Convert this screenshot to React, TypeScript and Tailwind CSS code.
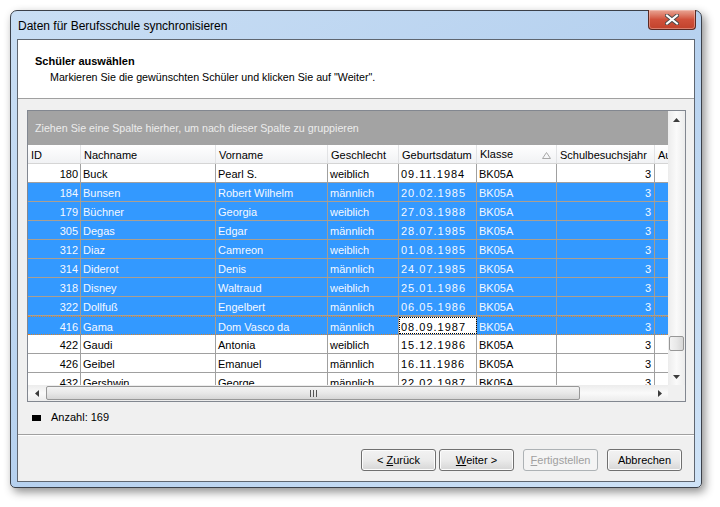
import React from "react"

type Row = { id: number; nach: string; vor: string; ges: string; geb: string; kl: string; jahr: number; sel: boolean; focus?: boolean }

const rows: Row[] = [
    { id: 180, nach: "Buck", vor: "Pearl S.", ges: "weiblich", geb: "09.11.1984", kl: "BK05A", jahr: 3, sel: false },
    { id: 184, nach: "Bunsen", vor: "Robert Wilhelm", ges: "männlich", geb: "20.02.1985", kl: "BK05A", jahr: 3, sel: true },
    { id: 179, nach: "Büchner", vor: "Georgia", ges: "weiblich", geb: "27.03.1988", kl: "BK05A", jahr: 3, sel: true },
    { id: 305, nach: "Degas", vor: "Edgar", ges: "männlich", geb: "28.07.1985", kl: "BK05A", jahr: 3, sel: true },
    { id: 312, nach: "Diaz", vor: "Camreon", ges: "weiblich", geb: "01.08.1985", kl: "BK05A", jahr: 3, sel: true },
    { id: 314, nach: "Diderot", vor: "Denis", ges: "männlich", geb: "24.07.1985", kl: "BK05A", jahr: 3, sel: true },
    { id: 318, nach: "Disney", vor: "Waltraud", ges: "weiblich", geb: "25.01.1986", kl: "BK05A", jahr: 3, sel: true },
    { id: 322, nach: "Dollfuß", vor: "Engelbert", ges: "männlich", geb: "06.05.1986", kl: "BK05A", jahr: 3, sel: true },
    { id: 416, nach: "Gama", vor: "Dom Vasco da", ges: "männlich", geb: "08.09.1987", kl: "BK05A", jahr: 3, sel: true, focus: true },
    { id: 422, nach: "Gaudi", vor: "Antonia", ges: "weiblich", geb: "15.12.1986", kl: "BK05A", jahr: 3, sel: false },
    { id: 426, nach: "Geibel", vor: "Emanuel", ges: "männlich", geb: "16.11.1986", kl: "BK05A", jahr: 3, sel: false },
    { id: 432, nach: "Gershwin", vor: "George", ges: "männlich", geb: "22.02.1987", kl: "BK05A", jahr: 3, sel: false },
]

const tahoma = { fontFamily: '"Liberation Sans", Arial, sans-serif' }

const Arrow = ({ dir }: { dir: "up" | "down" | "left" | "right" }) => {
    const pts = {
        up: "0,4 7,4 3.5,0",
        down: "0,0 7,0 3.5,4",
        left: "4,0 4,7 0,3.5",
        right: "0,0 0,7 4,3.5",
    }[dir]
    const vertical = dir === "up" || dir === "down"
    return <svg width={vertical ? 7 : 4} height={vertical ? 4 : 7} viewBox={vertical ? "0 0 7 4" : "0 0 4 7"}>
        <polygon points={pts} fill="#3c3c3c" />
    </svg>
}

const Btn = ({ children, disabled }: { children: React.ReactNode; disabled?: boolean }) => (
    <div
        className={disabled
            ? "w-[75px] h-[22px] rounded-[3px] border border-[#adb2b5] bg-[#f4f4f4] text-[#a0a0a0] flex items-center justify-center text-[11px]"
            : "w-[75px] h-[22px] rounded-[3px] border border-[#707070] bg-gradient-to-b from-[#f2f2f2] via-[#ebebeb] to-[#d6d6d6] text-black flex items-center justify-center text-[11px] shadow-[inset_0_0_0_1px_#fcfcfc]"}
        style={tahoma}
    >
        {children}
    </div>
)

export default function App() {
    return <div className="w-[720px] h-[507px] bg-white pl-[10px] pt-[10px] overflow-hidden" style={tahoma}>
        <div className="w-[692px] h-[478px] rounded-t-[7px] rounded-b-[5px] border border-[#3b4049] bg-gradient-to-br from-[#c9def4] via-[#b6d1ef] to-[#cfe3f7] shadow-[3px_4px_10px_rgba(0,0,0,0.45)] flex flex-col px-[6px] pb-[5px]">
            {/* title bar */}
            <div className="h-[28px] flex items-start justify-between shrink-0">
                <span className="text-[12px] text-black pl-px mt-[6px]">Daten für Berufsschule synchronisieren</span>
                <div className="w-[48px] h-[20px] -mt-px mr-[-1px] rounded-b-[4px] border border-[#5a2a24] border-t-0 bg-gradient-to-b from-[#e8a595] via-[#d0513b] to-[#c1422c] flex items-center justify-center shadow-[inset_0_0_0_1px_rgba(255,220,210,0.4)]">
                    <svg width="14" height="11" viewBox="0 0 14 11">
                        <path d="M2 1.5 L12 9.5 M12 1.5 L2 9.5" stroke="#4b4b4b" strokeWidth="4" strokeLinecap="square" />
                        <path d="M2 1.5 L12 9.5 M12 1.5 L2 9.5" stroke="#ffffff" strokeWidth="2" strokeLinecap="square" />
                    </svg>
                </div>
            </div>

            {/* client */}
            <div className="flex-1 border border-[#5f6670] bg-[#f0f0f0] flex flex-col">
                <div className="h-[59px] bg-white border-b border-[#a0a0a0] pl-[17px] pt-[13px] shrink-0">
                    <div className="text-[11px] font-bold leading-[16px] text-black">Schüler auswählen</div>
                    <div className="text-[10.7px] leading-[16px] text-black pl-[15px]">Markieren Sie die gewünschten Schüler und klicken Sie auf "Weiter".</div>
                </div>

                <div className="flex-1 flex flex-col pl-[9px] pr-[8px] pt-[11px]">
                    {/* grid */}
                    <div className="w-[659px] h-[292px] border border-[#828790] bg-white flex flex-col text-[11px]">
                        <div className="flex h-[274px]">
                            <div className="w-[640px] flex flex-col overflow-hidden">
                                <div className="h-[34px] bg-[#a3a3a3] text-[#ececec] flex items-center pl-[7px] shrink-0 text-[10.7px]">Ziehen Sie eine Spalte hierher, um nach dieser Spalte zu gruppieren</div>
                                <div className="h-[19px] flex shrink-0 bg-gradient-to-b from-white to-[#f1f2f4] border-b border-[#d5d5d5] text-black leading-[21px]">
                                    <div className="w-[53px] shrink-0 border-r border-[#e2e3e5] pl-[3px]">ID</div>
                                    <div className="w-[135px] shrink-0 border-r border-[#e2e3e5] pl-[3px]">Nachname</div>
                                    <div className="w-[112px] shrink-0 border-r border-[#e2e3e5] pl-[3px]">Vorname</div>
                                    <div className="w-[71px] shrink-0 border-r border-[#e2e3e5] pl-[3px]">Geschlecht</div>
                                    <div className="w-[78px] shrink-0 border-r border-[#e2e3e5] pl-[3px]">Geburtsdatum</div>
                                    <div className="w-[80px] shrink-0 border-r border-[#e2e3e5] pl-[3px] pr-[5px] flex items-center justify-between">
                                        <span className="leading-[21px]">Klasse</span>
                                        <svg width="9" height="7" viewBox="0 0 9 7" className="mt-[3px]"><polygon points="4.5,0.5 8.5,6.5 0.5,6.5" fill="none" stroke="#a8a8a8" /></svg>
                                    </div>
                                    <div className="w-[98px] shrink-0 border-r border-[#e2e3e5] pl-[3px] whitespace-nowrap">Schulbesuchsjahr</div>
                                    <div className="w-[60px] shrink-0 pl-[3px]">Au</div>
                                </div>
                                <div className="flex-1 overflow-hidden">
                                    {rows.map(r => (
                                        <div
                                            key={r.id}
                                            className={r.sel
                                                ? `h-[19px] flex leading-[20px] bg-[#3399ff] text-[#f4f8ff] ${r.focus ? "border-y border-dotted border-[#d9822b]" : "border-b border-[#ab9f90]"}`
                                                : "h-[19px] flex leading-[20px] bg-white text-black border-b border-[#a0a0a0]"}
                                        >
                                            <div className={`w-[53px] shrink-0 border-r pr-[2px] text-right ${r.sel ? "border-[#a59c92]" : "border-[#a0a0a0]"}`}>{r.id}</div>
                                            <div className={`w-[135px] shrink-0 border-r pl-[2px] ${r.sel ? "border-[#a59c92]" : "border-[#a0a0a0]"}`}>{r.nach}</div>
                                            <div className={`w-[112px] shrink-0 border-r pl-[2px] ${r.sel ? "border-[#a59c92]" : "border-[#a0a0a0]"}`}>{r.vor}</div>
                                            <div className={`w-[71px] shrink-0 border-r pl-[2px] ${r.sel ? "border-[#a59c92]" : "border-[#a0a0a0]"}`}>{r.ges}</div>
                                            <div className={`w-[78px] shrink-0 border-r pl-[2px] tracking-[1px] ${r.sel ? "border-[#a59c92]" : "border-[#a0a0a0]"} ${r.focus ? "bg-white text-black outline outline-1 outline-dotted outline-black -outline-offset-1" : ""}`}>{r.geb}</div>
                                            <div className={`w-[80px] shrink-0 border-r pl-[2px] ${r.sel ? "border-[#a59c92]" : "border-[#a0a0a0]"}`}>{r.kl}</div>
                                            <div className={`w-[98px] shrink-0 border-r pr-[3px] text-right ${r.sel ? "border-[#a59c92]" : "border-[#a0a0a0]"}`}>{r.jahr}</div>
                                            <div className="w-[60px] shrink-0" />
                                        </div>
                                    ))}
                                </div>
                            </div>
                            {/* vertical scrollbar */}
                            <div className="w-[17px] flex flex-col bg-gradient-to-r from-[#ececec] via-[#fafafa] to-[#ececec]">
                                <div className="h-[17px] flex items-center justify-center"><Arrow dir="up" /></div>
                                <div className="flex-1 flex flex-col">
                                    <div className="h-[208px]" />
                                    <div className="h-[15px] mx-px rounded-[2px] border border-[#979797] bg-gradient-to-r from-[#f3f3f3] via-[#e8e8e8] to-[#d6d6d6]" />
                                </div>
                                <div className="h-[17px] flex items-center justify-center"><Arrow dir="down" /></div>
                            </div>
                        </div>
                        {/* horizontal scrollbar */}
                        <div className="flex h-[16px]">
                            <div className="w-[640px] flex bg-gradient-to-b from-[#ececec] via-[#fafafa] to-[#ececec]">
                                <div className="w-[17px] flex items-center justify-center"><Arrow dir="left" /></div>
                                <div className="flex-1 flex py-px">
                                    <div className="w-[534px] ml-px rounded-[2px] border border-[#979797] bg-gradient-to-b from-[#f3f3f3] via-[#e8e8e8] to-[#d6d6d6] flex items-center justify-center">
                                        <svg width="7" height="7" viewBox="0 0 7 7">
                                            <path d="M0.5 0 V7 M3.5 0 V7 M6.5 0 V7" stroke="#555" strokeWidth="1" />
                                        </svg>
                                    </div>
                                </div>
                                <div className="w-[17px] flex items-center justify-center"><Arrow dir="right" /></div>
                            </div>
                            <div className="w-[17px] bg-[#f0f0f0]" />
                        </div>
                    </div>

                    <div className="flex items-center h-[31px] pl-[5px] text-[11px] text-black">
                        <div className="w-[9px] h-[6px] bg-black mr-[10px]" />
                        <span>Anzahl: 169</span>
                    </div>
                </div>

                {/* buttons */}
                <div className="h-[47px] shrink-0 border-t border-[#a0a0a0] shadow-[inset_0_1px_0_#ffffff] flex justify-end items-start pt-[14px] pr-[12px]">
                    <Btn>&lt; <span className="underline ml-[3px]">Z</span>urück</Btn>
                    <div className="w-[3px]" />
                    <Btn><span className="underline">W</span>eiter &gt;</Btn>
                    <div className="w-[9px]" />
                    <Btn disabled><span className="underline">F</span>ertigstellen</Btn>
                    <div className="w-[9px]" />
                    <Btn>Abbrechen</Btn>
                </div>
            </div>
        </div>
    </div>
}
